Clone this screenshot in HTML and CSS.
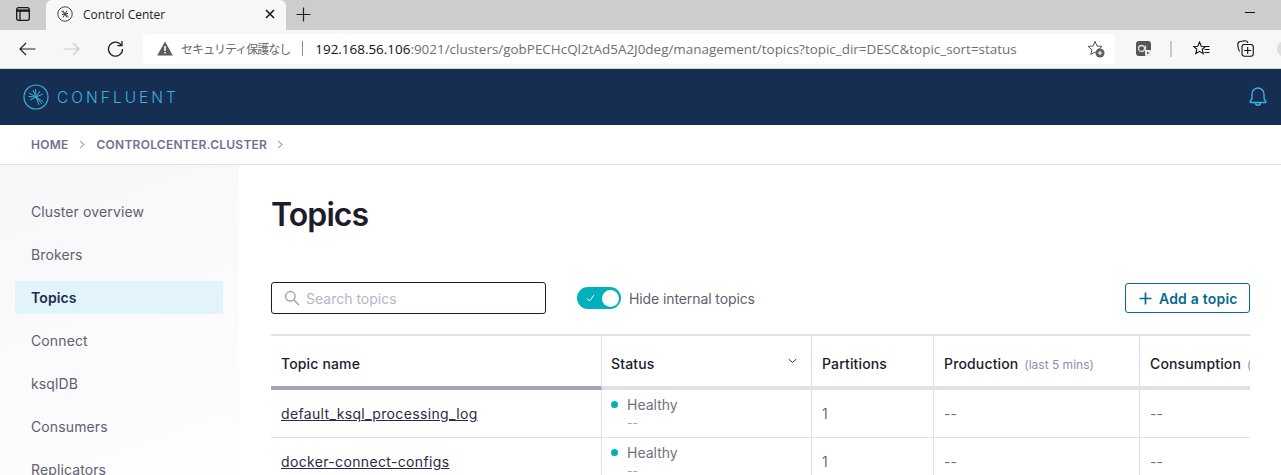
FILE: index.html
```html
<!DOCTYPE html>
<html lang="ja">
<head>
    <meta charset="UTF-8">
    <meta name="viewport" content="width=device-width, initial-scale=1.0">
    <title>Control Center</title>
    <link rel="stylesheet" href="styles.css">
</head>
<body>
    <div class="tabbar">
        <div class="tab-toggle">
            <svg width="16" height="16" viewBox="0 0 16 16" fill="none" stroke="#1a1a1a" stroke-width="1.3"><rect x="1.7" y="1.7" width="12.6" height="12.6" rx="2"/><path d="M1.7 4.6h12.6" stroke-width="2.4"/><path d="M5 4.6v9.7"/></svg>
        </div>
        <div class="tab">
            <svg class="favicon" width="16" height="16" viewBox="0 0 16 16" fill="none"><circle cx="8" cy="8" r="7.2" stroke="#3b4252" stroke-width="1"/><path d="M4.5 5.2 8 8l-3 .6M11.5 10.8 8 8l3-.6M6 4.5 8 8l2 3.500M10 4.5 8 8l-2 3.500" stroke="#3b4252" stroke-width="1"/></svg>
            <span class="tab-title">Control Center</span>
            <svg class="tab-close" width="10" height="10" viewBox="0 0 10 10" stroke="#111" stroke-width="1.500"><path d="M1 1l8 8M9 1l-8 8"/></svg>
        </div>
        <svg class="tab-new" width="15" height="15" viewBox="0 0 15 15" stroke="#222" stroke-width="1.200"><path d="M7.500 0.500v14M0.500 7.500h14"/></svg>
        <div class="tab-space"></div>
        <div class="minimize"></div>
    </div>

    <div class="toolbar">
        <div class="tool-btn">
            <svg width="17" height="14" viewBox="0 0 17 14" fill="none" stroke="#222" stroke-width="1.200"><path d="M16.500 7H1M7 1 1 7l6 6"/></svg>
        </div>
        <div class="tool-btn">
            <svg width="17" height="14" viewBox="0 0 17 14" fill="none" stroke="#c9c9c9" stroke-width="1.200"><path d="M0.500 7H16M10 1l6 6-6 6"/></svg>
        </div>
        <div class="tool-btn">
            <svg width="17" height="17" viewBox="0 0 17 17" fill="none" stroke="#222" stroke-width="1.300"><path d="M14.300 5.200A7 7 0 1 0 15.500 9"/><path d="M15 1v4.600h-4.600"/></svg>
        </div>
        <div class="address">
            <svg class="warn" width="16" height="15" viewBox="0 0 16 15"><path d="M8 0.500 15.800 14.500H0.200Z" fill="#5c5c5c"/><path d="M7.200 5h1.600v5H7.200zM7.200 11h1.600v1.600H7.200z" fill="#fff"/></svg>
            <span class="not-secure">セキュリティ保護なし</span>
            <span class="addr-sep"></span>
            <span class="url"><b>192.168.56.106</b>:9021/clusters/gobPECHcQl2tAd5A2J0deg/management/topics?topic_dir=DESC&amp;topic_sort=status</span>
            <svg class="fav-add" width="18" height="18" viewBox="0 0 18 18" fill="none"><path d="M8 1.300 10 6l5 .4-3.800 3.300 1 4.800L8 12l-4.200 2.500 1.100-4.800L1.100 6.400 6.100 6Z" stroke="#555" stroke-width="1"/><circle cx="13" cy="13" r="4.500" fill="#5c5c5c"/><path d="M13 10.700v4.600M10.700 13h4.600" stroke="#fff" stroke-width="1.100"/></svg>
        </div>
        <div class="ext-icon ext-first">
            <svg width="15" height="15" viewBox="0 0 15 15"><rect width="15" height="15" rx="3" fill="#555"/><circle cx="5.500" cy="7.500" r="3" fill="none" stroke="#ddd" stroke-width="1.300"/><path d="M9.500 4.500v6" stroke="#ddd" stroke-width="1.300"/><rect x="9" y="9" width="6" height="6" rx="1" fill="#eee"/><path d="M11 10.500v3l2.500-1.500z" fill="#666"/></svg>
        </div>
        <span class="tool-sep"></span>
        <div class="ext-icon fav-list">
            <svg width="17" height="16" viewBox="0 0 17 16" fill="none" stroke="#111" stroke-width="1.100"><path d="M6.500 1 8.300 5.200l4.200.3-3.200 2.800 1 4.300-3.800-2.300L2.800 12.600l1-4.300L.7 5.500l4.100-.3Z"/><path d="M11.500 5.500h5M11.500 8.500h5M11.500 11.500h5"/></svg>
        </div>
        <div class="ext-icon collections">
            <svg width="17" height="17" viewBox="0 0 17 17" fill="none" stroke="#111" stroke-width="1.100"><path d="M2.500 11.500C1 9 .8 6 .8 4.500A3 3 0 0 1 3.500 1.500L8 .8c1.500-.2 2.500.5 3 2.200"/><rect x="5" y="4.500" width="11.300" height="11.700" rx="2.500"/><path d="M10.700 7v7M7.200 10.500h7"/></svg>
        </div>
        <div class="profile"></div>
    </div>

    <header class="topbar">
        <div class="logo">
            <svg width="26" height="26" viewBox="0 0 26 26" fill="none" stroke="#38b3dc"><circle cx="13" cy="13" r="12" stroke-width="1.200"/><path d="M13 13 6 9M13 13 5.500 12.500M13 13 7 16M13 13 10 6M13 13 12.500 5M13 13 19 20M13 13 20.500 18M13 13 16 21M13 13 20 10M13 13 17 7" stroke-width="1"/></svg>
            <span class="logo-text">CONFLUENT</span>
        </div>
        <svg class="bell" width="18" height="20" viewBox="0 0 18 20" fill="none" stroke="#38b3dc" stroke-width="1.400"><path d="M1 14.800c0-1 2-1.300 2-4.300V7a6 6 0 0 1 12 0v3.500c0 3 2 3.300 2 4.300 0 .4-.3.700-.7.700H1.700c-.4 0-.7-.3-.7-.7Z"/><path d="M6.500 15.700a2.500 2.500 0 0 0 5 0"/></svg>
    </header>

    <nav class="breadcrumb">
        <a>HOME</a>
        <svg width="6" height="9" viewBox="0 0 6 9" fill="none" stroke="#a5a5b8" stroke-width="1.100"><path d="M1 .8 5 4.500 1 8.200"/></svg>
        <a>CONTROLCENTER.CLUSTER</a>
        <svg width="6" height="9" viewBox="0 0 6 9" fill="none" stroke="#a5a5b8" stroke-width="1.100"><path d="M1 .8 5 4.500 1 8.200"/></svg>
    </nav>

    <div class="page">
        <aside class="sidebar">
            <a class="side-item">Cluster overview</a>
            <a class="side-item">Brokers</a>
            <a class="side-item active">Topics</a>
            <a class="side-item">Connect</a>
            <a class="side-item">ksqlDB</a>
            <a class="side-item">Consumers</a>
            <a class="side-item">Replicators</a>
        </aside>

        <main class="content">
            <h1>Topics</h1>
            <div class="controls">
                <div class="search">
                    <svg width="16" height="16" viewBox="0 0 16 16" fill="none" stroke="#a3a3b3" stroke-width="1.500"><circle cx="6.300" cy="6.300" r="4.800"/><path d="m10 10 5 5"/></svg>
                    <span class="placeholder">Search topics</span>
                </div>
                <div class="toggle">
                    <svg width="9" height="8" viewBox="0 0 9 8" fill="none" stroke="#fff" stroke-width="1"><path d="M1 4.500 3.500 7 8 1"/></svg>
                    <span class="knob"></span>
                </div>
                <span class="toggle-label">Hide internal topics</span>
                <button class="add-btn">
                    <svg width="13" height="13" viewBox="0 0 13 13" stroke="#066a8e" stroke-width="1.700"><path d="M6.500 0.500v12M0.500 6.500h12"/></svg>
                    Add a topic
                </button>
            </div>

            <div class="table-wrap">
                <table>
                    <thead>
                        <tr>
                            <th class="col-name sorted">Topic name</th>
                            <th class="col-status">Status
                                <svg class="sort-arrow" width="9" height="6" viewBox="0 0 9 6" fill="none" stroke="#333" stroke-width="1"><path d="m.7 1 3.800 3.500L8.300 1"/></svg>
                            </th>
                            <th class="col-part">Partitions</th>
                            <th class="col-prod">Production <small>(last 5 mins)</small></th>
                            <th class="col-cons">Consumption <small>(last 5 mins)</small></th>
                        </tr>
                    </thead>
                    <tbody>
                        <tr>
                            <td><a class="topic-link">default_ksql_processing_log</a></td>
                            <td class="status-cell"><div class="health"><i class="dot"></i>Healthy</div><div class="sub">--</div></td>
                            <td>1</td>
                            <td>--</td>
                            <td>--</td>
                        </tr>
                        <tr>
                            <td><a class="topic-link">docker-connect-configs</a></td>
                            <td class="status-cell"><div class="health"><i class="dot"></i>Healthy</div><div class="sub">--</div></td>
                            <td>1</td>
                            <td>--</td>
                            <td>--</td>
                        </tr>
                    </tbody>
                </table>
            </div>
        </main>
    </div>
</body>
</html>
```

FILE: styles.css
```css
* {
    box-sizing: border-box;
}

html, body {
    height: 475px;
    margin: 0;
    overflow: hidden;
}

body {
    font-family: Inter, "Noto Sans", sans-serif;
    background-color: white;
    color: #1c1c2b;
}

/* browser chrome */
.tabbar {
    display: flex;
    align-items: center;
    height: 30px;
    background-color: #cdcdcd;
}

.tab-toggle {
    display: flex;
    justify-content: center;
    width: 46px;
    padding-bottom: 2px;
}

.tab {
    display: flex;
    align-items: center;
    width: 240px;
    height: 30px;
    padding-left: 11px;
    padding-bottom: 2px;
    background-color: #f7f7f7;
    border-radius: 6px 6px 0 0;
}

.tab-title {
    flex: 1;
    margin-left: 10px;
    font-family: "Open Sans", sans-serif;
    font-size: 12px;
    color: #222;
}

.tab-close {
    margin-right: 11px;
}

.tab-new {
    margin-left: 10px;
    margin-bottom: 2px;
}

.tab-space {
    flex: 1;
}

.minimize {
    width: 10px;
    height: 1px;
    margin-right: 26px;
    margin-bottom: 6px;
    background-color: #111;
}

.toolbar {
    display: flex;
    align-items: center;
    height: 39px;
    padding-left: 5px;
    padding-bottom: 1px;
    overflow: hidden;
    background-color: #f7f7f7;
    border-bottom: 1px solid #d0d0d0;
}

.tool-btn {
    display: flex;
    flex-shrink: 0;
    justify-content: center;
    width: 44px;
}

.address {
    display: flex;
    align-items: center;
    flex-shrink: 0;
    width: 972px;
    height: 30px;
    margin-left: 6px;
    padding-left: 14px;
    background-color: white;
    border-radius: 4px;
}

.warn {
    flex-shrink: 0;
}

.not-secure {
    margin-left: 8px;
    font-family: "Noto Sans CJK JP", sans-serif;
    font-size: 12px;
    letter-spacing: -1px;
    color: #6a6a6a;
    white-space: nowrap;
}

.addr-sep {
    width: 1px;
    height: 15px;
    margin-left: 12px;
    background-color: #8a8a8a;
}

.url {
    flex: 1;
    margin-left: 12px;
    font-family: "Open Sans", sans-serif;
    font-size: 13.440px;
    color: #6f6f6f;
    white-space: nowrap;
}

.url b {
    font-weight: 400;
    color: #111;
}

.fav-add {
    margin-right: 10px;
}

.ext-icon {
    display: flex;
    flex-shrink: 0;
    justify-content: center;
    width: 24px;
}

.ext-first {
    margin-left: 16px;
}

.tool-sep {
    flex-shrink: 0;
    width: 2px;
    height: 16px;
    margin-left: 15px;
    background-color: #c8c8c8;
}

.fav-list {
    margin-left: 17px;
}

.collections {
    margin-left: 20px;
}

.profile {
    flex-shrink: 0;
    width: 16px;
    height: 16px;
    margin-left: 20px;
    border-radius: 50%;
    background-color: #ddd;
}

/* app header */
.topbar {
    display: flex;
    align-items: center;
    justify-content: space-between;
    height: 56px;
    padding: 0 14px 0 23px;
    background-color: #152e52;
}

.logo {
    display: flex;
    align-items: center;
}

.logo-text {
    margin-left: 8px;
    font-size: 15.500px;
    font-weight: 300;
    letter-spacing: 3px;
    color: #38b3dc;
}

.breadcrumb {
    display: flex;
    align-items: center;
    height: 40px;
    padding-left: 31px;
    border-bottom: 1px solid #e1e1e9;
    font-size: 12px;
    font-weight: 600;
    letter-spacing: 0.250px;
    color: #71718f;
}

.breadcrumb svg {
    margin: 0 12px 0 10px;
}

/* page */
.page {
    display: flex;
    height: 310px;
}

.sidebar {
    flex-shrink: 0;
    display: flex;
    flex-direction: column;
    gap: 10px;
    width: 239px;
    height: 320px;
    padding: 30px 16px 0 15px;
    background: linear-gradient(160deg, #f7f7f9, #fefefe);
}

.side-item {
    display: flex;
    align-items: center;
    flex-shrink: 0;
    height: 33px;
    padding-left: 16px;
    font-size: 14px;
    letter-spacing: 0.120px;
    color: #5f5f6f;
}

.side-item.active {
    background-color: #e3f3fb;
    font-weight: 600;
    color: #152e52;
}

.content {
    flex: 1;
    min-width: 0;
    padding: 31px 31px 0 32px;
}

h1 {
    margin: 0;
    height: 38px;
    font-size: 32px;
    line-height: 38px;
    font-weight: 600;
    letter-spacing: -0.900px;
    color: #1c1c2b;
}

.controls {
    display: flex;
    align-items: center;
    height: 32px;
    margin-top: 48px;
}

.search {
    display: flex;
    align-items: center;
    gap: 6px;
    width: 275px;
    height: 32px;
    padding-left: 12px;
    border: 1px solid #1c1c2b;
    border-radius: 3px;
}

.placeholder {
    font-size: 14px;
    color: #b5b5c5;
}

.toggle {
    display: flex;
    align-items: center;
    justify-content: space-between;
    width: 44px;
    height: 22px;
    margin-left: 31px;
    padding: 0 2px 0 9px;
    background-color: #00b0bb;
    border-radius: 11px;
}

.knob {
    width: 17px;
    height: 17px;
    background-color: white;
    border-radius: 50%;
}

.toggle-label {
    margin-left: 8px;
    font-size: 14px;
    letter-spacing: -0.100px;
    color: #5f5f6f;
}

.add-btn {
    display: flex;
    align-items: center;
    gap: 7px;
    width: 125px;
    height: 30px;
    margin-left: auto;
    padding: 0 0 0 13px;
    background-color: white;
    border: 1px solid #066a8e;
    border-radius: 3px;
    font-family: inherit;
    font-size: 14px;
    font-weight: 600;
    letter-spacing: 0.200px;
    color: #066a8e;
}

.table-wrap {
    margin-top: 20px;
    overflow: hidden;
    border-top: 2px solid #e1e1e9;
}

table {
    width: 1100px;
    table-layout: fixed;
    border-collapse: separate;
    border-spacing: 0;
}

th {
    position: relative;
    height: 54px;
    padding: 4px 10px 0;
    border-right: 1px solid #e1e1e9;
    border-bottom: 4px solid #e1e1e9;
    font-size: 14px;
    font-weight: 500;
    letter-spacing: 0.150px;
    text-align: left;
    white-space: nowrap;
    color: #1c1c2b;
}

th.sorted {
    border-bottom-color: #a5a5b8;
}

th.col-status {
    padding-left: 9px;
}

th small {
    margin-left: 2px;
    font-size: 12px;
    font-weight: 400;
    letter-spacing: 0;
    color: #8e8eaa;
}

.col-name { width: 331px; }
.col-status { width: 210px; }
.col-part { width: 122px; }
.col-prod { width: 206px; }
.col-cons { width: 231px; }

.sort-arrow {
    position: absolute;
    top: 22px;
    right: 14px;
}

td {
    height: 48px;
    padding: 0 10px;
    border-right: 1px solid #e1e1e9;
    border-bottom: 1px solid #e1e1e9;
    font-size: 14px;
    color: #71717f;
}

td.status-cell {
    padding-left: 9px;
}

.topic-link {
    letter-spacing: 0.350px;
    color: #2b2b45;
    text-decoration: underline;
}

.health {
    display: flex;
    align-items: center;
    color: #71717f;
    line-height: 18px;
}

.dot {
    width: 7px;
    height: 7px;
    margin-right: 9px;
    background-color: #00b0bb;
    border-radius: 50%;
}

.sub {
    padding-left: 16px;
    line-height: 18px;
    font-size: 12px;
    color: #a5a5b5;
}
```
